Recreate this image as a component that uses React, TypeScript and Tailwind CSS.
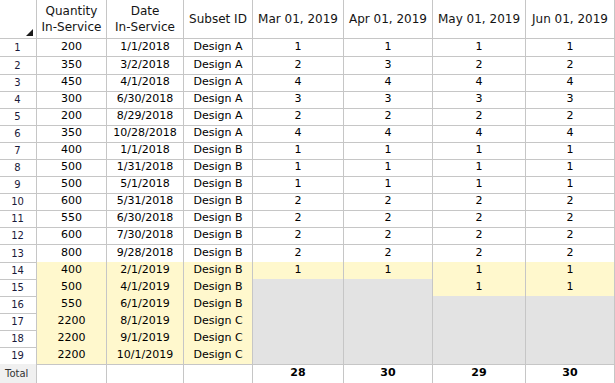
import React from "react";

const Y = "bg-[#fff8cd]";
const G = "bg-[#e3e3e3]";

type Cell = { v?: string; bg?: string };

const rows: { q: string; d: string; s: string; vals: Cell[]; y?: boolean }[] = [
  { q: "200", d: "1/1/2018", s: "Design A", vals: ["1", "1", "1", "1"].map((v) => ({ v })) },
  { q: "350", d: "3/2/2018", s: "Design A", vals: ["2", "3", "2", "2"].map((v) => ({ v })) },
  { q: "450", d: "4/1/2018", s: "Design A", vals: ["4", "4", "4", "4"].map((v) => ({ v })) },
  { q: "300", d: "6/30/2018", s: "Design A", vals: ["3", "3", "3", "3"].map((v) => ({ v })) },
  { q: "200", d: "8/29/2018", s: "Design A", vals: ["2", "2", "2", "2"].map((v) => ({ v })) },
  { q: "350", d: "10/28/2018", s: "Design A", vals: ["4", "4", "4", "4"].map((v) => ({ v })) },
  { q: "400", d: "1/1/2018", s: "Design B", vals: ["1", "1", "1", "1"].map((v) => ({ v })) },
  { q: "500", d: "1/31/2018", s: "Design B", vals: ["1", "1", "1", "1"].map((v) => ({ v })) },
  { q: "500", d: "5/1/2018", s: "Design B", vals: ["1", "1", "1", "1"].map((v) => ({ v })) },
  { q: "600", d: "5/31/2018", s: "Design B", vals: ["2", "2", "2", "2"].map((v) => ({ v })) },
  { q: "550", d: "6/30/2018", s: "Design B", vals: ["2", "2", "2", "2"].map((v) => ({ v })) },
  { q: "600", d: "7/30/2018", s: "Design B", vals: ["2", "2", "2", "2"].map((v) => ({ v })) },
  { q: "800", d: "9/28/2018", s: "Design B", vals: ["2", "2", "2", "2"].map((v) => ({ v })) },
  { q: "400", d: "2/1/2019", s: "Design B", y: true, vals: ["1", "1", "1", "1"].map((v) => ({ v, bg: Y })) },
  { q: "500", d: "4/1/2019", s: "Design B", y: true, vals: [{ bg: G }, { bg: G }, { v: "1", bg: Y }, { v: "1", bg: Y }] },
  { q: "550", d: "6/1/2019", s: "Design B", y: true, vals: [{ bg: G }, { bg: G }, { bg: G }, { bg: G }] },
  { q: "2200", d: "8/1/2019", s: "Design C", y: true, vals: [{ bg: G }, { bg: G }, { bg: G }, { bg: G }] },
  { q: "2200", d: "9/1/2019", s: "Design C", y: true, vals: [{ bg: G }, { bg: G }, { bg: G }, { bg: G }] },
  { q: "2200", d: "10/1/2019", s: "Design C", y: true, vals: [{ bg: G }, { bg: G }, { bg: G }, { bg: G }] },
];

const gridCls = "grid grid-cols-[37px_70px_77px_69px_91px_89px_93px_89px]";
const cell = "border-r border-b border-[#c6c6c6] flex items-center justify-center";

export default function App() {
  return (
    <div
      className="w-[615px] h-[383px] bg-white text-[11px] text-black overflow-hidden"
      style={{ fontFamily: '"DejaVu Sans", Verdana, sans-serif' }}
    >
      {/* header */}
      <div className={`${gridCls} h-[39px] text-[12px] leading-[16px] text-[#141414]`}>
        <div className={`${cell} !items-end !justify-end pr-[3px] pb-[2px]`}>
          <svg width="7" height="7" viewBox="0 0 7 7">
            <polygon points="7,0 7,7 0,7" fill="#1a1a1a" />
          </svg>
        </div>
        <div className={`${cell} flex-col text-center`}>
          <span>Quantity</span>
          <span>In-Service</span>
        </div>
        <div className={`${cell} flex-col text-center`}>
          <span>Date</span>
          <span>In-Service</span>
        </div>
        <div className={cell}>Subset ID</div>
        <div className={cell}>Mar 01, 2019</div>
        <div className={cell}>Apr 01, 2019</div>
        <div className={cell}>May 01, 2019</div>
        <div className={cell}>Jun 01, 2019</div>
      </div>
      {rows.map((r, i) => (
        <div key={i} className={`${gridCls} ${i === 0 || i === 11 ? "h-[18px]" : "h-[17px]"}`}>
          <div className={`${cell} text-[10px] text-[#1a1a3a] pr-[1px]`}>{i + 1}</div>
          <div className={`${cell} ${r.y ? Y : ""}`}>{r.q}</div>
          <div className={`${cell} ${r.y ? Y : ""}`}>{r.d}</div>
          <div className={`${cell} ${r.y ? Y : ""}`}>{r.s}</div>
          {r.vals.map((c, j) => (
            <div key={j} className={`${cell} ${c.bg ?? ""}`}>
              {c.v ?? ""}
            </div>
          ))}
        </div>
      ))}
      <div className={`${gridCls} h-[20px]`}>
        <div className={`${cell} !justify-start pl-[5px] bg-[#f0f0f0] text-[10px] text-[#333]`}>Total</div>
        <div className={cell}></div>
        <div className={cell}></div>
        <div className={cell}></div>
        <div className={`${cell} font-bold`}>28</div>
        <div className={`${cell} font-bold`}>30</div>
        <div className={`${cell} font-bold`}>29</div>
        <div className={`${cell} font-bold`}>30</div>
      </div>
    </div>
  );
}
